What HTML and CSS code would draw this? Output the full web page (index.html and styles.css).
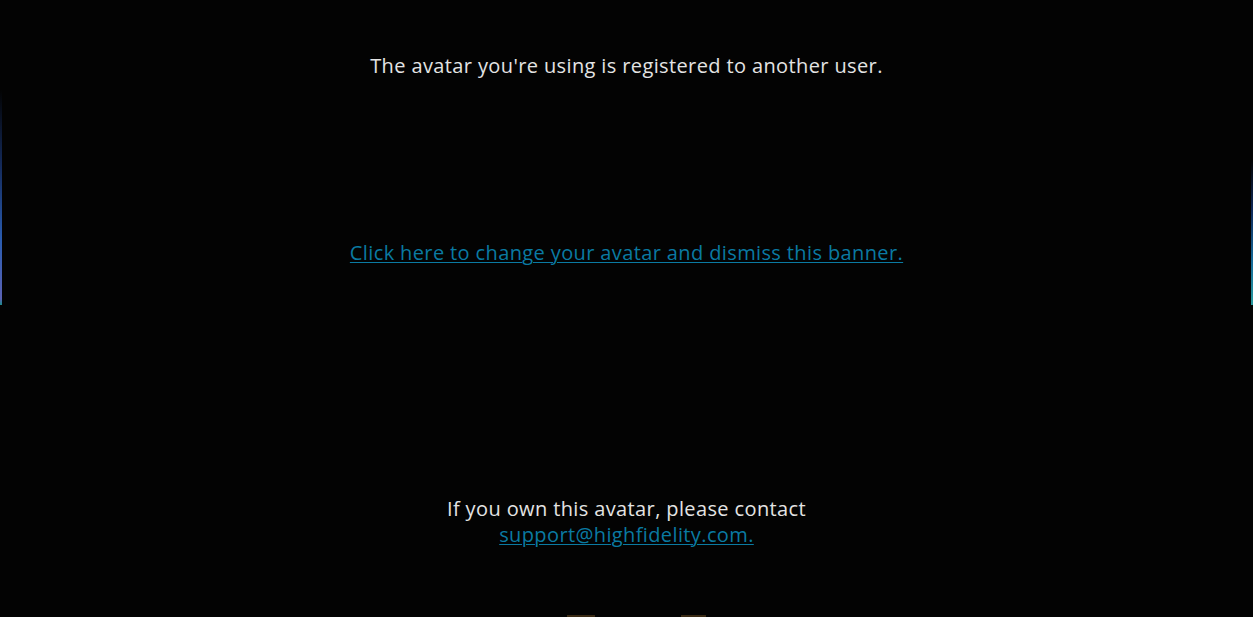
FILE: index.html
```html
<!DOCTYPE html>
<html lang="en">
<head>
<meta charset="utf-8">
<title>Avatar registered</title>
<link rel="stylesheet" href="styles.css">
</head>
<body>
<div class="edge edge-left"></div>
<div class="edge edge-right"></div>
<main class="banner">
  <p class="notice">The avatar you're using is registered to another user.</p>
  <a class="link dismiss" href="#">Click here to change your avatar and dismiss this banner.</a>
  <p class="contact">If you own this avatar, please contact<br><a class="link" href="#">support@highfidelity.com.</a></p>
  <div class="stubs"><span class="stub"></span><span class="stub stub-right"></span></div>
</main>
</body>
</html>
```
FILE: styles.css
```css
html, body {
  margin: 0;
  padding: 0;
  height: 100%;
  overflow: hidden;
}
body {
  background: #030303;
  color: #e4e4e4;
  font-family: "Open Sans", "Liberation Sans", sans-serif;
  font-size: 20px;
  letter-spacing: 0.38px;
  line-height: 26px;
  position: relative;
}
.banner {
  display: flex;
  flex-direction: column;
  align-items: center;
  text-align: center;
  padding-top: 53px;
  height: 100%;
  box-sizing: border-box;
}
.notice {
  margin: 0;
}
.link {
  color: #0a7aa2;
  text-decoration: underline;
  text-decoration-thickness: 1px;
  text-underline-offset: 2px;
}
.dismiss {
  margin-top: 161px;
}
.contact {
  margin: 230px 0 0;
}
.stubs {
  margin-top: auto;
  display: flex;
  gap: 86px;
  margin-left: 19px;
}
.stub {
  width: 28px;
  height: 2px;
  background: #3a2a14;
}
.stub-right {
  width: 25px;
}
.edge {
  position: absolute;
  width: 2px;
}
.edge-left {
  left: 0;
  top: 90px;
  height: 215px;
  background: linear-gradient(to bottom, rgba(20,30,60,0) 0%, #142a5a 35%, #2a5cb0 70%, #5a62b4 97%, #1a8a8a 100%);
}
.edge-right {
  right: 0;
  top: 160px;
  height: 145px;
  background: linear-gradient(to bottom, rgba(10,20,50,0) 0%, #0f2a5a 35%, #166a98 70%, #2a9a9e 100%);
}
```
